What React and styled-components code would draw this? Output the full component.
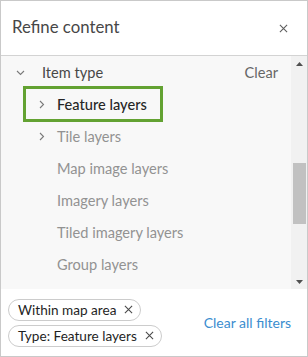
import React from "react";
import styled, { createGlobalStyle } from "styled-components";

const GlobalStyle = createGlobalStyle`
  html, body { margin: 0; padding: 0; background: #ffffff; }
  body { font-family: Lato, "Open Sans", sans-serif; -webkit-font-smoothing: antialiased; }
  * { box-sizing: border-box; }
`;

const Panel = styled.div`
  width: 308px;
  height: 357px;
  border: 1px solid #c9c9c9;
  display: flex;
  flex-direction: column;
  background: #ffffff;
`;

const Header = styled.div`
  height: 55px;
  flex: none;
  display: flex;
  align-items: center;
  justify-content: space-between;
  padding: 0 19px 0 11px;
  border-bottom: 1px solid #d3d3d3;
`;

const Title = styled.div`
  font-size: 16.8px;
  line-height: 20px;
  color: #474747;
  padding-bottom: 2px;
`;

const IconButton = styled.button`
  border: 0;
  background: none;
  padding: 0;
  display: flex;
  color: #5e5e5e;
  cursor: pointer;
`;

const Body = styled.div`
  flex: 1;
  display: flex;
  background: #f8f8f8;
  overflow: hidden;
  min-height: 0;
`;

const List = styled.div`
  flex: 1;
  display: flex;
  flex-direction: column;
  align-items: flex-start;
`;

const GroupRow = styled.div`
  height: 32px;
  flex: none;
  align-self: stretch;
  display: flex;
  align-items: center;
  padding: 0 13px 0 15px;
  font-size: 14.6px;
  color: #474747;
`;

const GroupLabel = styled.span`
  flex: 1;
  margin-left: 6px;
`;

const ClearLink = styled.span`
  color: #666666;
  font-size: 14.6px;
`;

const ItemRow = styled.div`
  height: 32px;
  flex: none;
  display: flex;
  align-items: center;
  margin-left: 24px;
  width: ${(p) => (p.$highlight ? "136px" : "auto")};
  padding-left: 12px;
  font-size: 14.6px;
  white-space: nowrap;
  color: ${(p) => (p.$active ? "#262626" : "#929292")};
  font-weight: ${(p) => (p.$active ? 500 : 400)};
  outline: ${(p) => (p.$highlight ? "3px solid #63a232" : "none")};
  outline-offset: -1px;
`;

const ChevronSlot = styled.span`
  width: 20px;
  flex: none;
  display: flex;
  align-items: center;
  color: #7a7a7a;
`;

const Scrollbar = styled.div`
  width: 16px;
  flex: none;
  display: flex;
  flex-direction: column;
  background: #f1f1f1;
`;

const ScrollArrow = styled.div`
  height: 15px;
  flex: none;
  display: flex;
  align-items: center;
  justify-content: center;
`;

const Track = styled.div`
  flex: 1;
  display: flex;
  flex-direction: column;
  padding: 92px 1px 0 2px;
`;

const Thumb = styled.div`
  height: 61px;
  background: #c1c1c1;
`;

const Footer = styled.div`
  height: 67px;
  flex: none;
  display: flex;
  align-items: center;
  justify-content: space-between;
  padding: 0 16px 0 7px;
`;

const Chips = styled.div`
  display: flex;
  flex-direction: column;
  align-items: flex-start;
  gap: 4px;
`;

const Chip = styled.div`
  height: 22px;
  display: flex;
  align-items: center;
  border: 1px solid #cccccc;
  border-radius: 11px;
  padding: 0 7px 0 9px;
  font-size: 13.6px;
  line-height: 16px;
  color: #1f1f1f;
  gap: 8px;
  white-space: nowrap;
`;

const ChipClose = styled.span`
  display: flex;
  color: #4a4a4a;
`;

const ClearAll = styled.span`
  font-size: 14px;
  line-height: 16px;
  color: #3b8dcf;
`;

const Chevron = ({ dir }) => (
  <svg width="9" height="9" viewBox="0 0 9 9" fill="none" stroke="currentColor" strokeWidth="1.1">
    {dir === "down" ? <path d="M1 3 L4.5 6.5 L8 3" /> : <path d="M3 1 L6.5 4.5 L3 8" />}
  </svg>
);

const XIcon = ({ size = 9 }) => (
  <svg width={size} height={size} viewBox="0 0 10 10" fill="none" stroke="currentColor" strokeWidth="1.2">
    <path d="M1 1 L9 9 M9 1 L1 9" />
  </svg>
);

const items = [
  { label: "Feature layers", chevron: true, active: true, highlight: true },
  { label: "Tile layers", chevron: true },
  { label: "Map image layers" },
  { label: "Imagery layers" },
  { label: "Tiled imagery layers" },
  { label: "Group layers" },
  { label: "Scene layers" },
];

export default function App() {
  return (
    <>
      <GlobalStyle />
      <Panel>
        <Header>
          <Title>Refine content</Title>
          <IconButton aria-label="Close">
            <XIcon size={9} />
          </IconButton>
        </Header>
        <Body>
          <List>
            <GroupRow>
              <ChevronSlot>
                <Chevron dir="down" />
              </ChevronSlot>
              <GroupLabel>Item type</GroupLabel>
              <ClearLink>Clear</ClearLink>
            </GroupRow>
            {items.map((it) => (
              <ItemRow key={it.label} $active={it.active} $highlight={it.highlight}>
                <ChevronSlot>{it.chevron ? <Chevron dir="right" /> : null}</ChevronSlot>
                {it.label}
              </ItemRow>
            ))}
          </List>
          <Scrollbar>
            <ScrollArrow>
              <svg width="7" height="4" viewBox="0 0 7 4"><path d="M0 4 L3.5 0 L7 4 Z" fill="#505050" /></svg>
            </ScrollArrow>
            <Track>
              <Thumb />
            </Track>
            <ScrollArrow>
              <svg width="7" height="4" viewBox="0 0 7 4"><path d="M0 0 L3.5 4 L7 0 Z" fill="#505050" /></svg>
            </ScrollArrow>
          </Scrollbar>
        </Body>
        <Footer>
          <Chips>
            <Chip>
              Within map area
              <ChipClose><XIcon size={9} /></ChipClose>
            </Chip>
            <Chip>
              Type: Feature layers
              <ChipClose><XIcon size={9} /></ChipClose>
            </Chip>
          </Chips>
          <ClearAll>Clear all filters</ClearAll>
        </Footer>
      </Panel>
    </>
  );
}
